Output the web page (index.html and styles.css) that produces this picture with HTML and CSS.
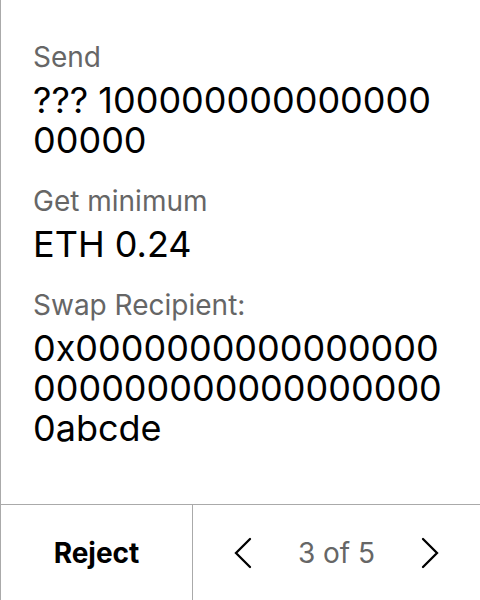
FILE: index.html
```html
<!DOCTYPE html>
<html>
<head>
<meta charset="utf-8">
<link rel="stylesheet" href="styles.css">
</head>
<body>
<div class="screen">
  <div class="content">
    <div class="field">
      <div class="label">Send</div>
      <div class="value">??? 10000000000000000000</div>
    </div>
    <div class="field">
      <div class="label">Get minimum</div>
      <div class="value">ETH 0.24</div>
    </div>
    <div class="field">
      <div class="label">Swap Recipient:</div>
      <div class="value">0x00000000000000000000000000000000000abcde</div>
    </div>
  </div>
  <div class="footer">
    <button class="reject">Reject</button>
    <div class="pager">
      <svg class="chev" width="18" height="32" viewBox="0 0 18 32"><path d="M16 2 L2 16 L16 30" fill="none" stroke="#000" stroke-width="2.3" stroke-linecap="round" stroke-linejoin="miter"/></svg>
      <span class="count">3 of 5</span>
      <svg class="chev" width="18" height="32" viewBox="0 0 18 32"><path d="M2 2 L16 16 L2 30" fill="none" stroke="#000" stroke-width="2.3" stroke-linecap="round" stroke-linejoin="miter"/></svg>
    </div>
  </div>
</div>
</body>
</html>
```
FILE: styles.css
```css
* { box-sizing: border-box; }
html, body { margin: 0; padding: 0; background: #fff; }
body { font-family: Inter, "Noto Sans", sans-serif; color: #000; }
.screen {
  width: 480px;
  height: 600px;
  border-left: 1px solid #aaa;
  display: flex;
  flex-direction: column;
}
.content {
  flex: 1;
  padding: 40px 32px 0 32px;
  display: flex;
  flex-direction: column;
  gap: 24px;
}
.label {
  font-size: 28px;
  line-height: 34px;
  color: #666;
}
.value {
  font-size: 36px;
  line-height: 40px;
  margin-top: 6px;
  word-break: break-all;
}
.footer {
  height: 96px;
  border-top: 1px solid #aaa;
  display: flex;
}
.reject {
  width: 192px;
  border: none;
  border-right: 1px solid #aaa;
  background: #fff;
  font-family: Inter, sans-serif;
  font-weight: 700;
  font-size: 28px;
  color: #000;
  padding: 0;
}
.pager {
  flex: 1;
  display: flex;
  align-items: center;
  justify-content: center;
  gap: 46px;
}
.count {
  font-size: 28px;
  color: #666;
}
```
